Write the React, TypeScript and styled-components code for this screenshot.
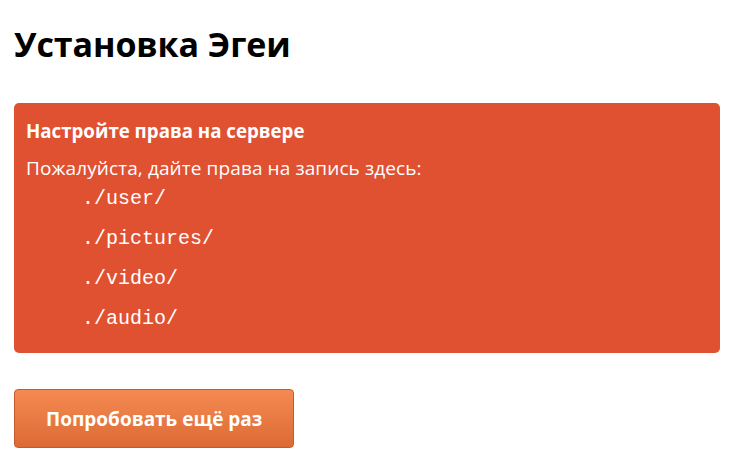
import React from "react"
import styled, { createGlobalStyle } from "styled-components"

const GlobalStyle = createGlobalStyle`
  body {
    margin: 0;
    background: #ffffff;
    font-family: "Open Sans", "Noto Sans", sans-serif;
    color: #000000;
  }
`

const Page = styled.div`
  width: 706px;
  padding: 20px 11px 20px 14px;
`

const Title = styled.h1`
  margin: 0 0 35px;
  font-size: 34px;
  line-height: 48px;
  font-weight: 700;
  letter-spacing: -0.1px;
`

const Alert = styled.div`
  background: #e05132;
  border-radius: 5px;
  color: #ffffff;
  padding: 15px 12px 14px;
`

const AlertTitle = styled.div`
  font-size: 18.7px;
  font-weight: 700;
  line-height: 26px;
  margin-bottom: 13px;
`

const AlertText = styled.div`
  font-size: 19px;
  line-height: 22px;
  letter-spacing: 0.1px;
`

const Paths = styled.ul`
  list-style: none;
  margin: 0;
  padding: 0 0 0 56px;
`

const PathItem = styled.li`
  font-family: "Liberation Mono", monospace;
  font-size: 20px;
  line-height: 40px;
`

const RetryButton = styled.button`
  margin-top: 36px;
  height: 59px;
  padding: 0 31px;
  border: 1px solid #c85a2a;
  border-radius: 4px;
  background: linear-gradient(to bottom, #f58a52, #dd6a35);
  color: #ffffff;
  font-family: "Open Sans", "Noto Sans", sans-serif;
  font-size: 19px;
  font-weight: 700;
  cursor: pointer;
`

const paths = ["./user/", "./pictures/", "./video/", "./audio/"]

export default function App(): JSX.Element {
  return (
    <Page>
      <GlobalStyle />
      <Title>Установка Эгеи</Title>
      <Alert>
        <AlertTitle>Настройте права на сервере</AlertTitle>
        <AlertText>Пожалуйста, дайте права на запись здесь:</AlertText>
        <Paths>
          {paths.map((p) => (
            <PathItem key={p}>{p}</PathItem>
          ))}
        </Paths>
      </Alert>
      <RetryButton>Попробовать ещё раз</RetryButton>
    </Page>
  )
}
